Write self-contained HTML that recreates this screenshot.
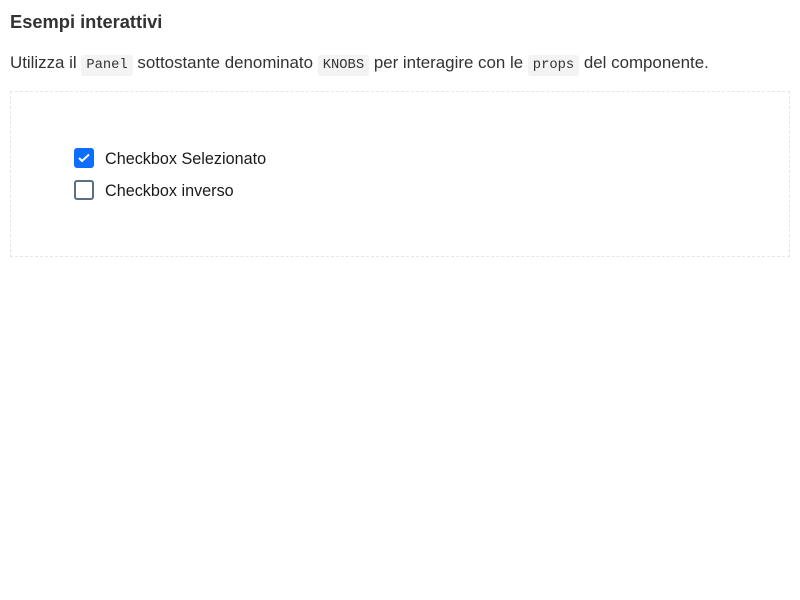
<!DOCTYPE html>
<html><head><style>
body{margin:0;background:#fff;font-family:"Liberation Sans",sans-serif;color:#333;}
h3{position:absolute;left:10px;top:10px;margin:0;font-size:18.3px;font-weight:bold;color:#333;line-height:24px;}
p{position:absolute;left:10px;top:52px;margin:0;font-size:16.9px;line-height:22px;color:#333;white-space:nowrap;}
code{font-family:"Liberation Mono",monospace;font-size:13.8px;background:#f3f3f3;padding:3px 5px;border-radius:3px;color:#333;}
.panel{position:absolute;left:10px;top:91px;width:778px;height:164px;border:1px dashed #e6e6e6;}
.cb{position:absolute;left:74px;width:16px;height:16px;border:2px solid #5b6f82;border-radius:3px;box-sizing:content-box;}
.cb.on{background:#0d6efd;border-color:#0d6efd;}
.lbl{position:absolute;left:105px;font-size:16.2px;color:#1a1a1a;line-height:20px;}
</style></head><body>
<h3>Esempi interattivi</h3>
<p>Utilizza il <code>Panel</code> sottostante denominato <code>KNOBS</code> per interagire con le <code>props</code> del componente.</p>
<div class="panel"></div>
<div class="cb on" style="top:148px;"><svg width="16" height="16" viewBox="0 0 16 16"><path d="M3 8l3 3L13 4.5" fill="none" stroke="#fff" stroke-width="2"/></svg></div>
<div class="lbl" style="top:149px;">Checkbox Selezionato</div>
<div class="cb" style="top:180px;"></div>
<div class="lbl" style="top:181px;">Checkbox inverso</div>
</body></html>
